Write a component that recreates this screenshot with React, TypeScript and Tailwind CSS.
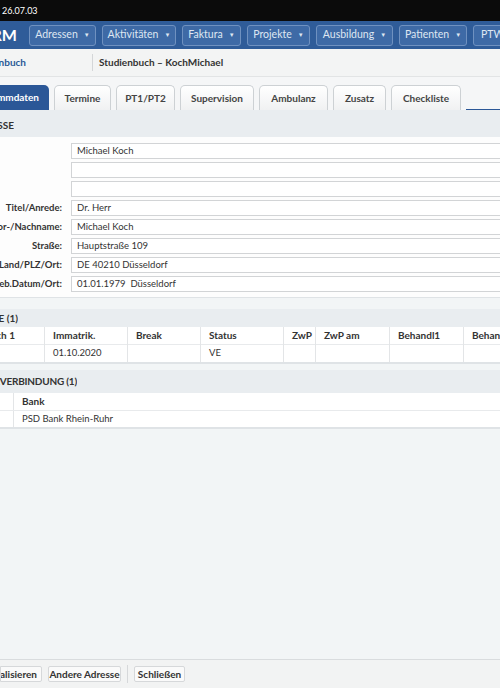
import React from "react";

const navItems = [
  { label: "Adressen", w: "w-[67px]" },
  { label: "Aktivitäten", w: "w-[74px]" },
  { label: "Faktura", w: "w-[59px]" },
  { label: "Projekte", w: "w-[63px]" },
  { label: "Ausbildung", w: "w-[77px]" },
  { label: "Patienten", w: "w-[68px]" },
];

const tabs = [
  { label: "Termine", w: "w-[57px]" },
  { label: "PT1/PT2", w: "w-[59px]" },
  { label: "Supervision", w: "w-[74px]" },
  { label: "Ambulanz", w: "w-[69px]" },
  { label: "Zusatz", w: "w-[53px]" },
  { label: "Checkliste", w: "w-[70px]" },
];

const rows = [
  { label: "", value: "Michael Koch" },
  { label: "", value: "" },
  { label: "", value: "" },
  { label: "Titel/Anrede:", value: "Dr. Herr" },
  { label: "Vor-/Nachname:", value: "Michael Koch" },
  { label: "Straße:", value: "Hauptstraße 109" },
  { label: "Land/PLZ/Ort:", value: "DE 40210 Düsseldorf" },
  { label: "Geb.Datum/Ort:", value: "01.01.1979  Düsseldorf" },
];

const cols = [
  { h: "Fach 1", v: "", w: "w-[44px]", clip: true },
  { h: "Immatrik.", v: "01.10.2020", w: "w-[83px]" },
  { h: "Break", v: "", w: "w-[73px]" },
  { h: "Status", v: "VE", w: "w-[83px]" },
  { h: "ZwP", v: "", w: "w-[32px]" },
  { h: "ZwP am", v: "", w: "w-[74px]" },
  { h: "Behandl1", v: "", w: "w-[74px]" },
  { h: "Behandl2", v: "", w: "w-[60px]" },
];

function Caret() {
  return <span className="ml-[6px] text-[6px] leading-none">▼</span>;
}

export default function App() {
  return (
    <div
      className="w-[500px] h-[688px] overflow-hidden flex flex-col bg-[#f2f5f6] text-[#333] text-[10px]"
      style={{ fontFamily: 'Lato, "Open Sans", sans-serif' }}
    >
      {/* system bar */}
      <div className="h-[21px] shrink-0 bg-[#0b0b0b] text-white text-[9px] flex items-center px-[2px]">
        26.07.03
      </div>

      {/* main nav */}
      <div className="h-[28px] shrink-0 bg-[#2f5c99] flex items-center gap-[6px] whitespace-nowrap text-[10.5px]">
        <div className="w-[23px] flex justify-end overflow-hidden text-white font-bold text-[16px] pr-[6px] shrink-0">
          CRM
        </div>
        {navItems.map((n) => (
          <div
            key={n.label}
            className={`${n.w} h-[21px] shrink-0 flex items-center justify-center rounded-[3px] border border-[#6f91c0] bg-[#3e6aa6] text-[#dfe7f2]`}
          >
            {n.label}
            <Caret />
          </div>
        ))}
        <div className="w-[40px] h-[21px] shrink-0 flex items-center pl-[7px] rounded-[3px] border border-[#6f91c0] bg-[#3e6aa6] text-[#dfe7f2]">
          PTW
        </div>
      </div>

      {/* breadcrumb */}
      <div className="h-[28px] shrink-0 bg-[#f3f4f4] border-b border-[#e2e4e5] flex items-center font-bold whitespace-nowrap">
        <div className="w-[26px] flex justify-end overflow-hidden text-[#2a5a97] shrink-0">Studienbuch</div>
        <div className="w-[66px] shrink-0" />
        <div className="w-px h-[17px] bg-[#d4d6d8] shrink-0" />
        <div className="pl-[6px]">Studienbuch – KochMichael</div>
      </div>

      {/* tabs */}
      <div className="h-[33px] shrink-0 bg-[#f5f6f7] flex items-end gap-[5px] pt-[6px] whitespace-nowrap font-bold">
        <div className="w-[49px] h-[25px] shrink-0 flex items-center justify-end pr-[10px] overflow-hidden bg-[#2b5797] text-white rounded-tr-[5px]">
          Stammdaten
        </div>
        {tabs.map((t) => (
          <div
            key={t.label}
            className={`${t.w} h-[25px] shrink-0 flex items-center justify-center rounded-t-[5px] border border-b-0 border-[#cdd1d4] bg-gradient-to-b from-white to-[#f0f1f2] text-[#444]`}
          >
            {t.label}
          </div>
        ))}
        <div className="flex-1 h-[2px] bg-[#2b5797] -mb-px" />
      </div>

      {/* address section */}
      <div className="shrink-0 border-b border-[#dfe3e6]">
        <div className="h-[27px] bg-[#e9edf0] flex items-center font-bold whitespace-nowrap pt-[4px]">
          <div className="w-[14px] flex justify-end overflow-hidden">ADRESSE</div>
        </div>
        <div className="bg-[#fdfdfd] pt-[6px] pb-[5px] flex flex-col gap-[3px]">
          {rows.map((r, i) => (
            <div key={i} className="flex items-center h-[16px]">
              <div className="w-[62px] shrink-0 flex justify-end overflow-hidden whitespace-nowrap font-bold text-[9.5px] text-[#333]">
                {r.label}
              </div>
              <div className="ml-[9px] flex-1 -mr-[20px] h-[16px] bg-white border border-[#d2d4d6] flex items-center px-[5px] whitespace-pre text-[9.5px]">
                {r.value}
              </div>
            </div>
          ))}
        </div>
      </div>

      {/* study table */}
      <div className="mt-[11px] shrink-0 border-b-[2px] border-[#dfe3e6]">
        <div className="h-[18px] bg-[#e9edf0] flex items-center font-bold whitespace-nowrap">
          <div className="w-[18px] flex justify-end overflow-hidden">STUDIENGÄNGE (1)</div>
        </div>
        <div className="bg-white flex whitespace-nowrap">
          {cols.map((c, i) => (
            <div key={c.h} className={`${c.w} shrink-0 ${i > 0 ? "border-l border-[#e3e5e7]" : ""}`}>
              <div
                className={`h-[18px] flex items-center font-bold text-[#333] border-b border-[#e8eaec] overflow-hidden ${
                  c.clip ? "justify-end pr-[29px]" : "px-[8px]"
                }`}
              >
                {c.h}
              </div>
              <div className="h-[17px] flex items-center px-[8px] text-[9.5px]">{c.v}</div>
            </div>
          ))}
        </div>
      </div>

      {/* bank table */}
      <div className="mt-[6px] shrink-0 border-b-[2px] border-[#dfe3e6]">
        <div className="h-[23px] bg-[#e9edf0] flex items-center font-bold whitespace-nowrap">
          <div className="w-[77px] flex justify-end overflow-hidden tracking-[-0.2px]">BANKVERBINDUNG (1)</div>
        </div>
        <div className="bg-white whitespace-nowrap">
          <div className="h-[18px] flex border-b border-[#e8eaec]">
            <div className="w-[13px] shrink-0" />
            <div className="flex-1 border-l border-[#e3e5e7] flex items-center px-[8px] font-bold">Bank</div>
          </div>
          <div className="h-[16px] flex">
            <div className="w-[13px] shrink-0" />
            <div className="flex-1 border-l border-[#e3e5e7] flex items-center px-[8px] text-[9.5px]">PSD Bank Rhein-Ruhr</div>
          </div>
        </div>
      </div>

      <div className="flex-1" />

      {/* footer */}
      <div className="h-[29px] shrink-0 border-t border-[#d9dcde] bg-[#f2f3f3] flex items-center gap-[6px] whitespace-nowrap">
        <div className="w-[42px] h-[16px] flex items-center justify-end pr-[4px] overflow-hidden bg-[#fafafa] border border-[#d6d8da] rounded-r-[2px] font-bold text-[#333] text-[10px]">
          Aktualisieren
        </div>
        <div className="w-[73px] h-[16px] flex items-center justify-center bg-[#fafafa] border border-[#d6d8da] rounded-[2px] font-bold text-[#333] text-[10px]">
          Andere Adresse
        </div>
        <div className="w-px h-[18px] bg-[#d6d8da]" />
        <div className="w-[51px] h-[16px] flex items-center justify-center bg-[#fafafa] border border-[#d6d8da] rounded-[2px] font-bold text-[#333] text-[10px]">
          Schließen
        </div>
      </div>
    </div>
  );
}
